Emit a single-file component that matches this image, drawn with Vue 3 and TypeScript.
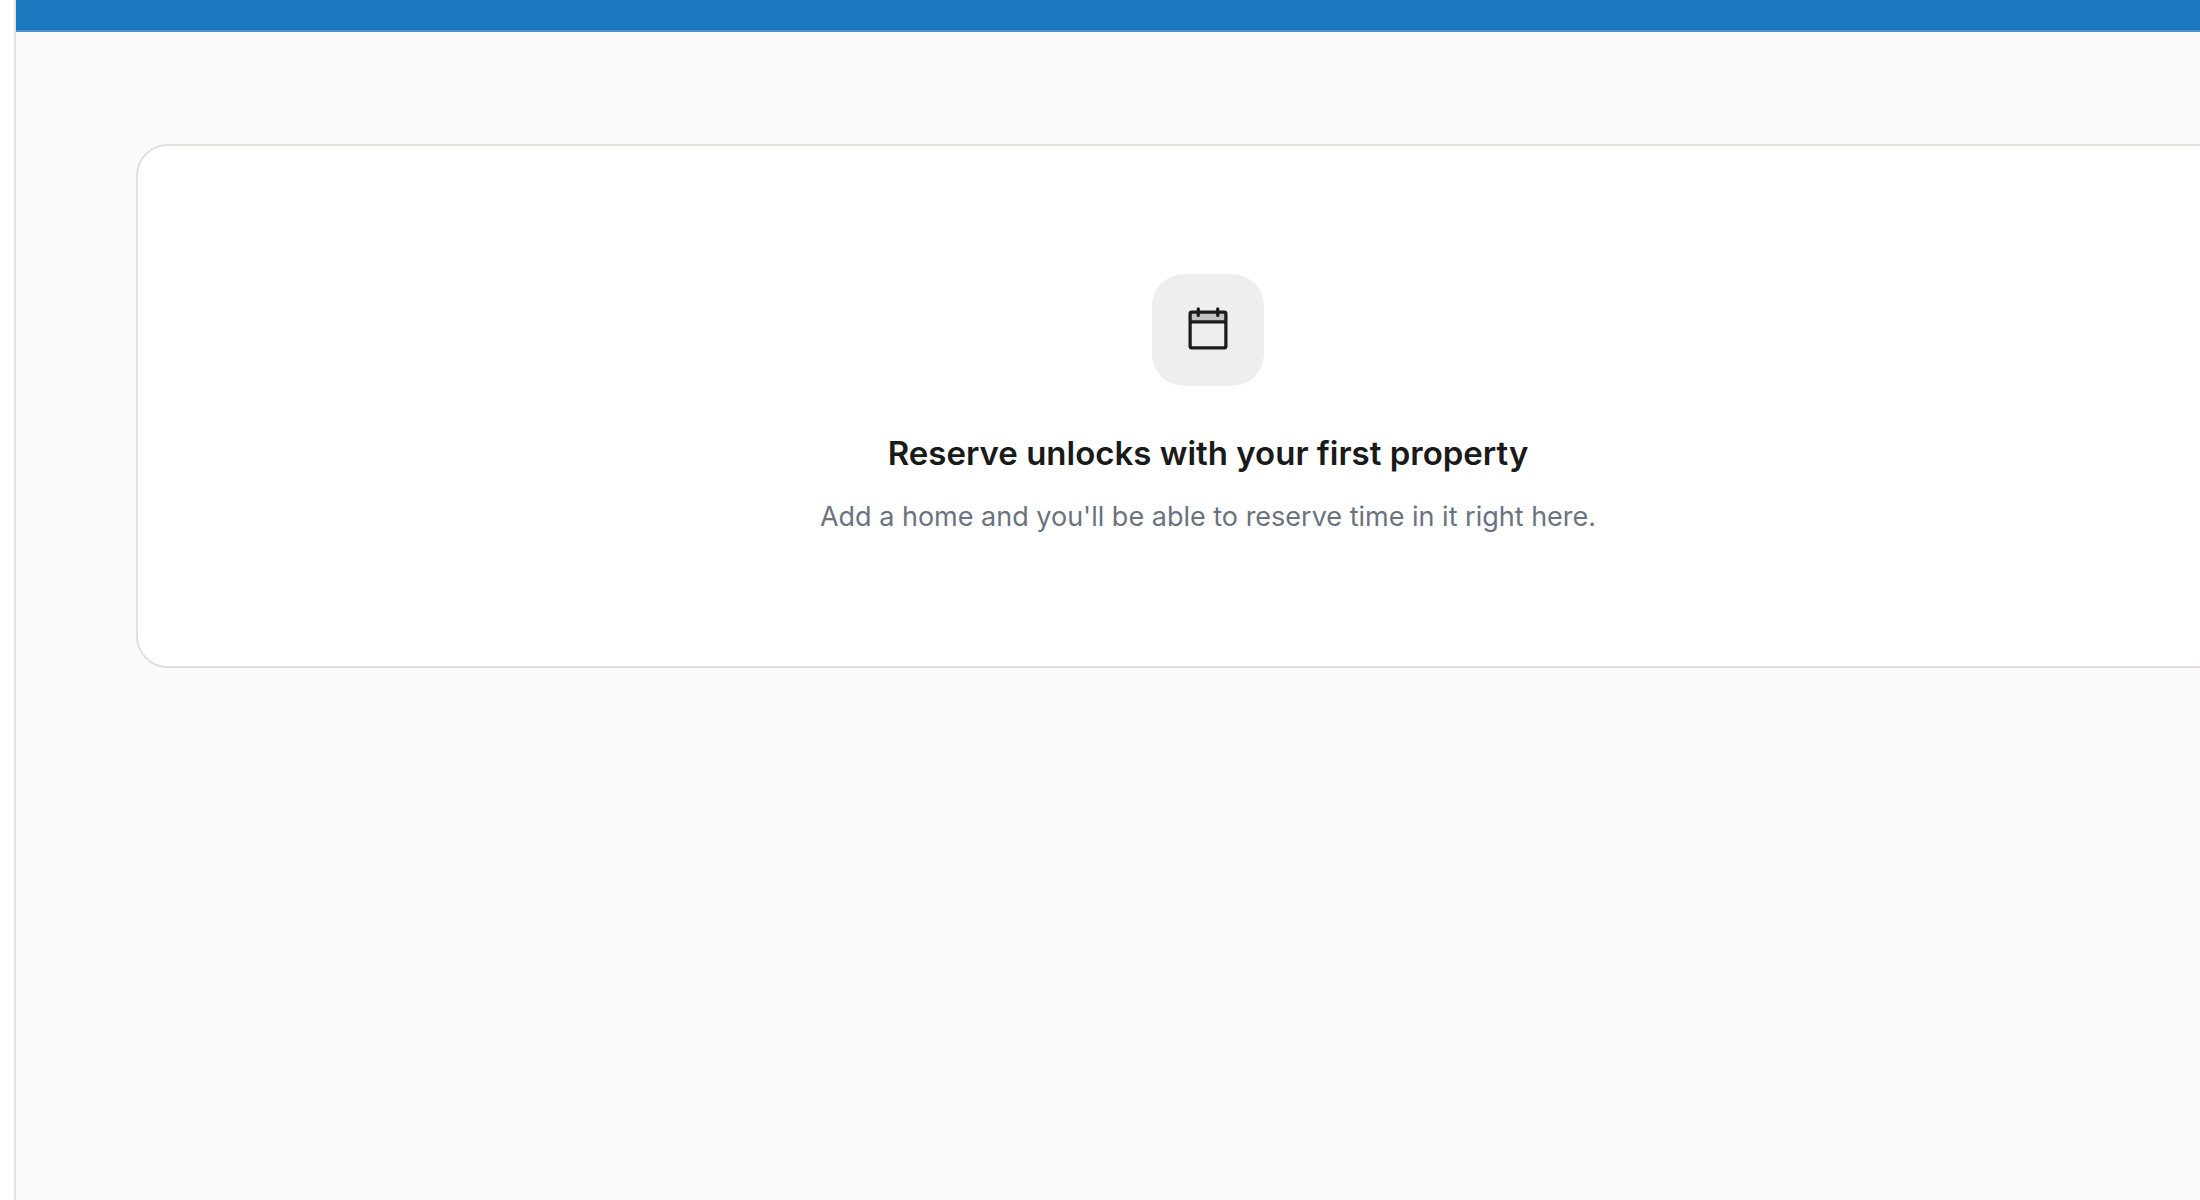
<script setup lang="ts">
const title: string = 'Reserve unlocks with your first property'
const message: string = "Add a home and you'll be able to reserve time in it right here."
</script>

<template>
  <div class="shell">
    <div class="banner"></div>
    <main class="content">
      <section class="empty-card" aria-labelledby="empty-title">
        <div class="icon-tile">
          <svg class="icon" viewBox="0 0 256 256" fill="currentColor" aria-hidden="true">
            <path d="M208,40H48a8,8,0,0,0-8,8V88H216V48A8,8,0,0,0,208,40Z" opacity="0.2" />
            <path
              d="M208,32H184V24a8,8,0,0,0-16,0v8H88V24a8,8,0,0,0-16,0v8H48A16,16,0,0,0,32,48V208a16,16,0,0,0,16,16H208a16,16,0,0,0,16-16V48A16,16,0,0,0,208,32ZM72,48v8a8,8,0,0,0,16,0V48h80v8a8,8,0,0,0,16,0V48h24V80H48V48ZM208,208H48V96H208V208Z"
            />
          </svg>
        </div>
        <h1 id="empty-title" class="title">{{ title }}</h1>
        <p class="message">{{ message }}</p>
      </section>
    </main>
  </div>
</template>

<style>
body {
  background: #ffffff;
}
</style>

<style scoped>
.shell {
  box-sizing: border-box;
  min-height: 100vh;
  margin-left: 14px;
  border-left: 2px solid #e2dedb;
  background: #fafafa;
  overflow: hidden;
  font-family: Inter, 'Liberation Sans', sans-serif;
}

.banner {
  height: 30px;
  background: #1b78be;
  border-bottom: 2px solid #4a93cf;
}

/* The card runs on past the right edge of the window. */
.content {
  margin-right: -200px;
  padding: 112px 120px;
}

.empty-card {
  display: flex;
  flex-direction: column;
  align-items: center;
  padding: 128px 64px;
  border: 2px solid #e2dedb;
  border-radius: 32px;
  background: #ffffff;
  text-align: center;
}

.icon-tile {
  display: flex;
  align-items: center;
  justify-content: center;
  width: 112px;
  height: 112px;
  margin-bottom: 40px;
  border-radius: 32px;
  background: #efeeec;
  color: #1c1b1a;
}

.icon {
  width: 52px;
  height: 52px;
}

.title {
  margin: 0 0 16px;
  color: #1a1a1a;
  font-size: 33px;
  font-weight: 600;
  line-height: 54px;
}

.message {
  margin: 0;
  color: #6b7280;
  font-size: 27px;
  line-height: 42px;
}
</style>
